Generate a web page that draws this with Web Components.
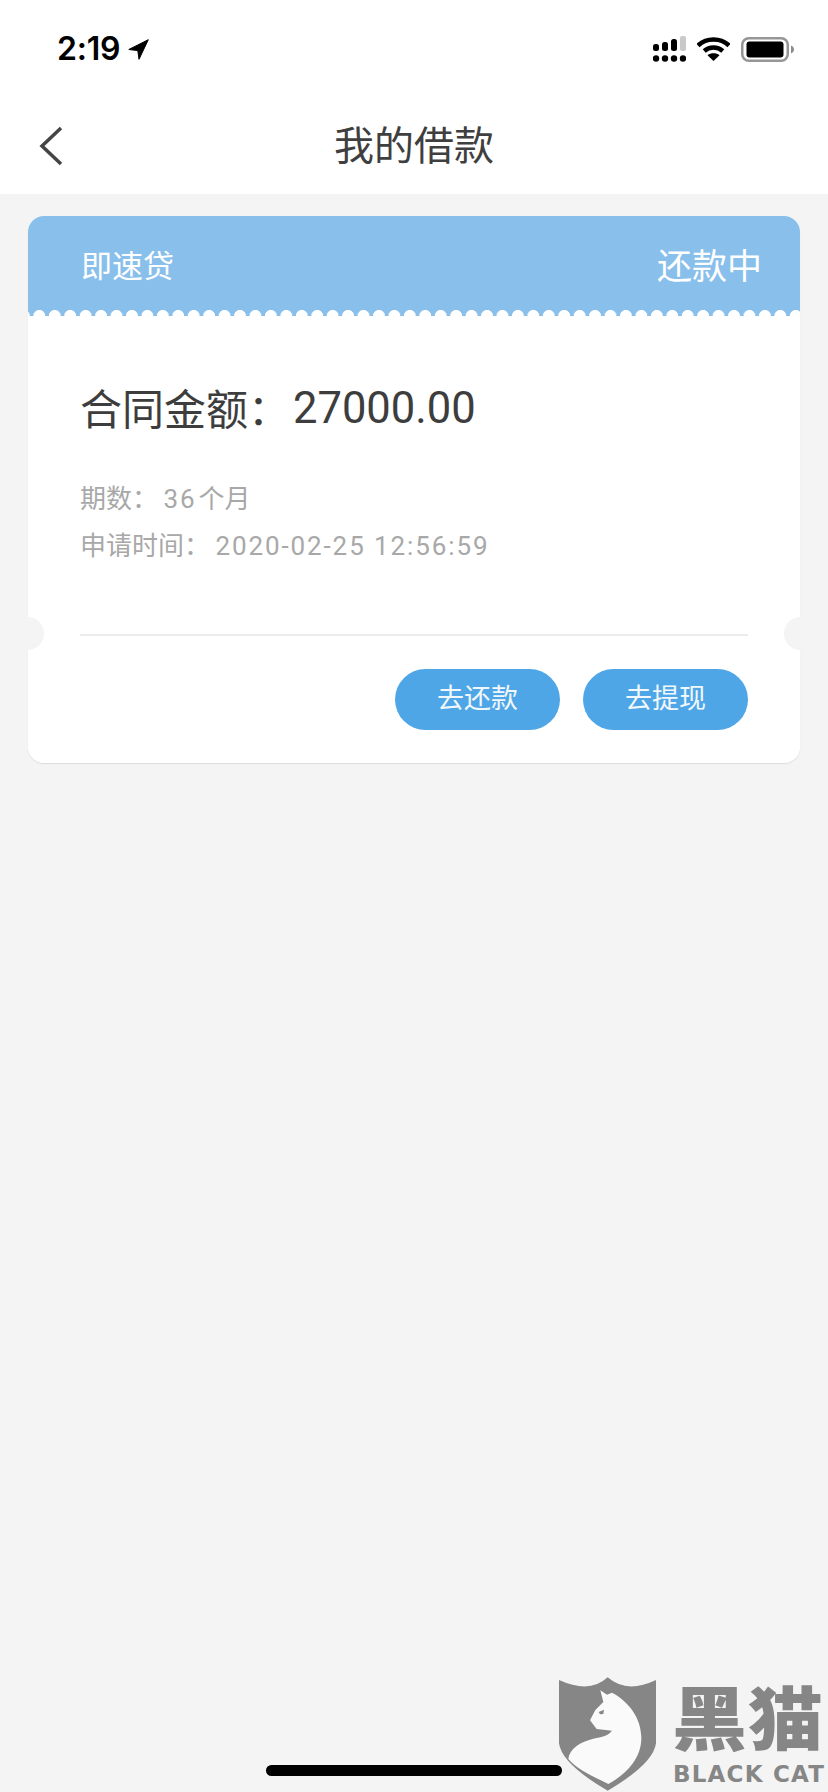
<!DOCTYPE html>
<html lang="zh">
<head>
<meta charset="utf-8">
<title>我的借款</title>
<style>
html, body { margin: 0; padding: 0; }
body {
  width: 828px;
  height: 1792px;
  overflow: hidden;
  background: #f4f4f4;
  font-family: "Liberation Sans", "Noto Sans CJK SC", sans-serif;
  position: relative;
}
</style>
</head>
<body>
<app-status-bar time="2:19"></app-status-bar>
<app-nav-bar>我的借款</app-nav-bar>
<loan-card>
  <span slot="product">即速贷</span>
  <span slot="status">还款中</span>
  <span slot="amount-label">合同金额：</span>
  <span slot="amount">27000.00</span>
  <span slot="term">期数：<num-text>36</num-text>个月</span>
  <span slot="date">申请时间：<num-text>2020-02-25 12:56:59</num-text></span>
  <pill-button slot="actions">去还款</pill-button>
  <pill-button slot="actions">去提现</pill-button>
</loan-card>
<home-indicator></home-indicator>
<black-cat-mark></black-cat-mark>

<script>
const FONT = `"Liberation Sans", "Noto Sans CJK SC", sans-serif`;

class AppStatusBar extends HTMLElement {
  constructor() {
    super();
    this.attachShadow({ mode: "open" });
    this.shadowRoot.innerHTML = `
<style>
:host { display: flex; align-items: center; justify-content: space-between; height: 88px; box-sizing: border-box; padding: 10px 34px 0 57px; background: #fff; }
.left, .right { display: flex; align-items: center; }
.time { font: 600 32px/1 Inter, ${FONT}; color: #000; letter-spacing: -0.2px; }
.left svg { margin-left: 8px; }
.right { gap: 11px; }
svg { display: block; }
</style>
<div class="left">
  <span class="time"></span>
  <svg width="21" height="21" viewBox="0 0 21 21"><path d="M.8 10.500 20.300.700 11 20.300 9.800 11.600Z" fill="#000" stroke="#000" stroke-linejoin="round"/></svg>
</div>
<div class="right">
  <svg width="33" height="26" viewBox="0 0 33 26">
    <rect x="0" y="8" width="6" height="7" rx="2.5"/>
    <rect x="9" y="6" width="6" height="9" rx="2.5"/>
    <rect x="18" y="3" width="6" height="12" rx="2.5"/>
    <rect x="27" y="0" width="6" height="15" rx="2" fill="#c9c9c9"/>
    <circle cx="3" cy="22.5" r="3.2"/><circle cx="12" cy="22.5" r="3.2"/><circle cx="21" cy="22.5" r="3.2"/><circle cx="30" cy="22.5" r="3.2"/>
  </svg>
  <svg width="33" height="24" viewBox="0 0 33 24">
    <path d="M1 8.5C9.5 .5 23.5 .5 32 8.500" fill="none" stroke="#000" stroke-width="4.600"/>
    <path d="M7.200 14C12.500 9.300 20.500 9.300 25.800 14" fill="none" stroke="#000" stroke-width="4.400"/>
    <path d="M10.500 18.200C14 15.600 19 15.600 22.500 18.200L16.500 24Z"/>
  </svg>
  <svg width="53" height="25" viewBox="0 0 53 25">
    <rect x="1.250" y="1.250" width="45.500" height="22.500" rx="6.500" fill="none" stroke="#969696" stroke-width="2.500"/>
    <rect x="5.500" y="4.500" width="37" height="16" rx="3"/>
    <path d="M50 8.500C52 9.200 53 10.800 53 12.500S52 15.800 50 16.500Z" fill="#8e8e8e"/>
  </svg>
</div>`;
  }
  connectedCallback() {
    this.shadowRoot.querySelector(".time").textContent = this.getAttribute("time");
  }
}

class AppNavBar extends HTMLElement {
  constructor() {
    super();
    this.attachShadow({ mode: "open" });
    this.shadowRoot.innerHTML = `
<style>
:host { display: flex; align-items: center; justify-content: center; height: 106px; background: #fff; position: relative; }
.title { font: 400 40px/1 ${FONT}; color: #3f3f3f; padding-top: 9px; }
.back { position: absolute; left: 39px; top: 37px; display: block; }
</style>
<svg class="back" width="24" height="42" viewBox="0 0 24 42"><path d="M22 3 3 21 22 39" fill="none" stroke="#454545" stroke-width="3.500"/></svg>
<span class="title"><slot></slot></span>`;
  }
}

class LoanCard extends HTMLElement {
  constructor() {
    super();
    this.attachShadow({ mode: "open" });
    this.shadowRoot.innerHTML = `
<style>
:host { display: block; position: relative; margin: 22px 28px 0; height: 547px; border-radius: 16px; box-shadow: 0 1px 1px #dcdcdc; }
.clip { height: 100%; display: flex; flex-direction: column; background: #fff; border-radius: 16px; overflow: hidden; }
header { flex: none; height: 100px; box-sizing: border-box; padding: 0 38px 0 53px; background: #89bfeb; color: #fff; display: flex; align-items: center; justify-content: space-between; position: relative; }
.product { font-size: 31px; line-height: 1; }
.status { font-size: 35px; line-height: 1; }
.scallop { position: absolute; left: 0; right: 0; bottom: 0; height: 6px; background: radial-gradient(circle at 50% 100%, #fff 5.700px, transparent 6.300px) 3.600px 0 / 15.450px 6px repeat-x; }
main { flex: none; height: 320px; box-sizing: border-box; margin: 0 52px; padding-top: 67px; border-bottom: 2px solid #ececec; }
.amount { display: flex; align-items: center; color: #3d3d3d; height: 50px; font-size: 42px; }
.amount-label { padding-bottom: 3px; }
.amount-value { font: 400 43.500px/1 Roboto, ${FONT}; margin-left: 3px; padding-top: 1px; }
.meta { margin-top: 43px; color: #a8a8a8; font-size: 26px; line-height: 47px; }
.meta div { height: 47px; }
footer { display: flex; justify-content: flex-end; gap: 23px; margin: 33px 52px 0; }
.notch { position: absolute; top: 401px; width: 33px; height: 33px; border-radius: 50%; background: #f4f4f4; }
.notch.l { left: -17px; }
.notch.r { right: -17px; }
</style>
<div class="clip">
  <header>
    <span class="product"><slot name="product"></slot></span>
    <span class="status"><slot name="status"></slot></span>
    <div class="scallop"></div>
  </header>
  <main>
    <div class="amount"><span class="amount-label"><slot name="amount-label"></slot></span><span class="amount-value"><slot name="amount"></slot></span></div>
    <div class="meta">
      <div><slot name="term"></slot></div>
      <div><slot name="date"></slot></div>
    </div>
  </main>
  <footer><slot name="actions"></slot></footer>
  <div class="notch l"></div>
  <div class="notch r"></div>
</div>`;
  }
}

class NumText extends HTMLElement {
  constructor() {
    super();
    this.attachShadow({ mode: "open" });
    this.shadowRoot.innerHTML = `
<style>:host { display: inline; margin: 0 2px 0 -3px; font-family: Roboto, sans-serif; letter-spacing: 1.900px; }</style>
<slot></slot>`;
  }
}

class PillButton extends HTMLElement {
  constructor() {
    super();
    this.attachShadow({ mode: "open" });
    this.shadowRoot.innerHTML = `
<style>
:host { display: flex; align-items: center; justify-content: center; width: 165px; height: 61px; border-radius: 31px; background: #4fa6e6; color: #f1f8fd; font-size: 27px; line-height: 1; }
</style>
<slot></slot>`;
  }
}

class HomeIndicator extends HTMLElement {
  constructor() {
    super();
    this.attachShadow({ mode: "open" });
    this.shadowRoot.innerHTML = `
<style>
:host { display: block; position: absolute; left: 266px; top: 1765px; width: 296px; height: 11px; border-radius: 6px; background: #000; }
</style>`;
  }
}

class BlackCatMark extends HTMLElement {
  constructor() {
    super();
    this.attachShadow({ mode: "open" });
    this.shadowRoot.innerHTML = `
<style>
:host { display: flex; position: absolute; left: 558px; top: 1676px; width: 270px; height: 116px; color: #868686; }
svg { flex: none; display: block; }
.words { margin-left: 15px; display: flex; flex-direction: column; white-space: nowrap; }
.cn { font: 900 75px/72px "Noto Sans CJK SC", sans-serif; letter-spacing: 1px; margin-top: 6px; transform: scaleY(0.93); transform-origin: 0 0; }
.en { font: 700 23px/22px "DejaVu Sans", sans-serif; letter-spacing: 1.200px; margin-top: 9px; margin-left: 1px; }
</style>
<svg width="99" height="116" viewBox="54 48 297 348">
  <path d="M57 60Q150 102 203 52Q260 102 348 60V250Q340 312 203 392Q65 312 57 250Z" fill="#868686"/>
  <path d="M181 91 201 104 216 98C262 122 303 170 304 232C305 300 250 348 205 372C165 352 110 328 85 297C88 268 118 246 160 236C186 231 206 226 216 212L170 207 150 181 166 150 190 126Z" fill="#fafafa"/>
  <path d="M176 156 192 149 190 162 180 163Z" fill="#868686"/>
</svg>
<div class="words">
  <span class="cn">黑猫</span>
  <span class="en">BLACK CAT</span>
</div>`;
  }
}

window.customElements.define("app-status-bar", AppStatusBar);
window.customElements.define("app-nav-bar", AppNavBar);
window.customElements.define("loan-card", LoanCard);
window.customElements.define("num-text", NumText);
window.customElements.define("pill-button", PillButton);
window.customElements.define("home-indicator", HomeIndicator);
window.customElements.define("black-cat-mark", BlackCatMark);
</script>
</body>
</html>
